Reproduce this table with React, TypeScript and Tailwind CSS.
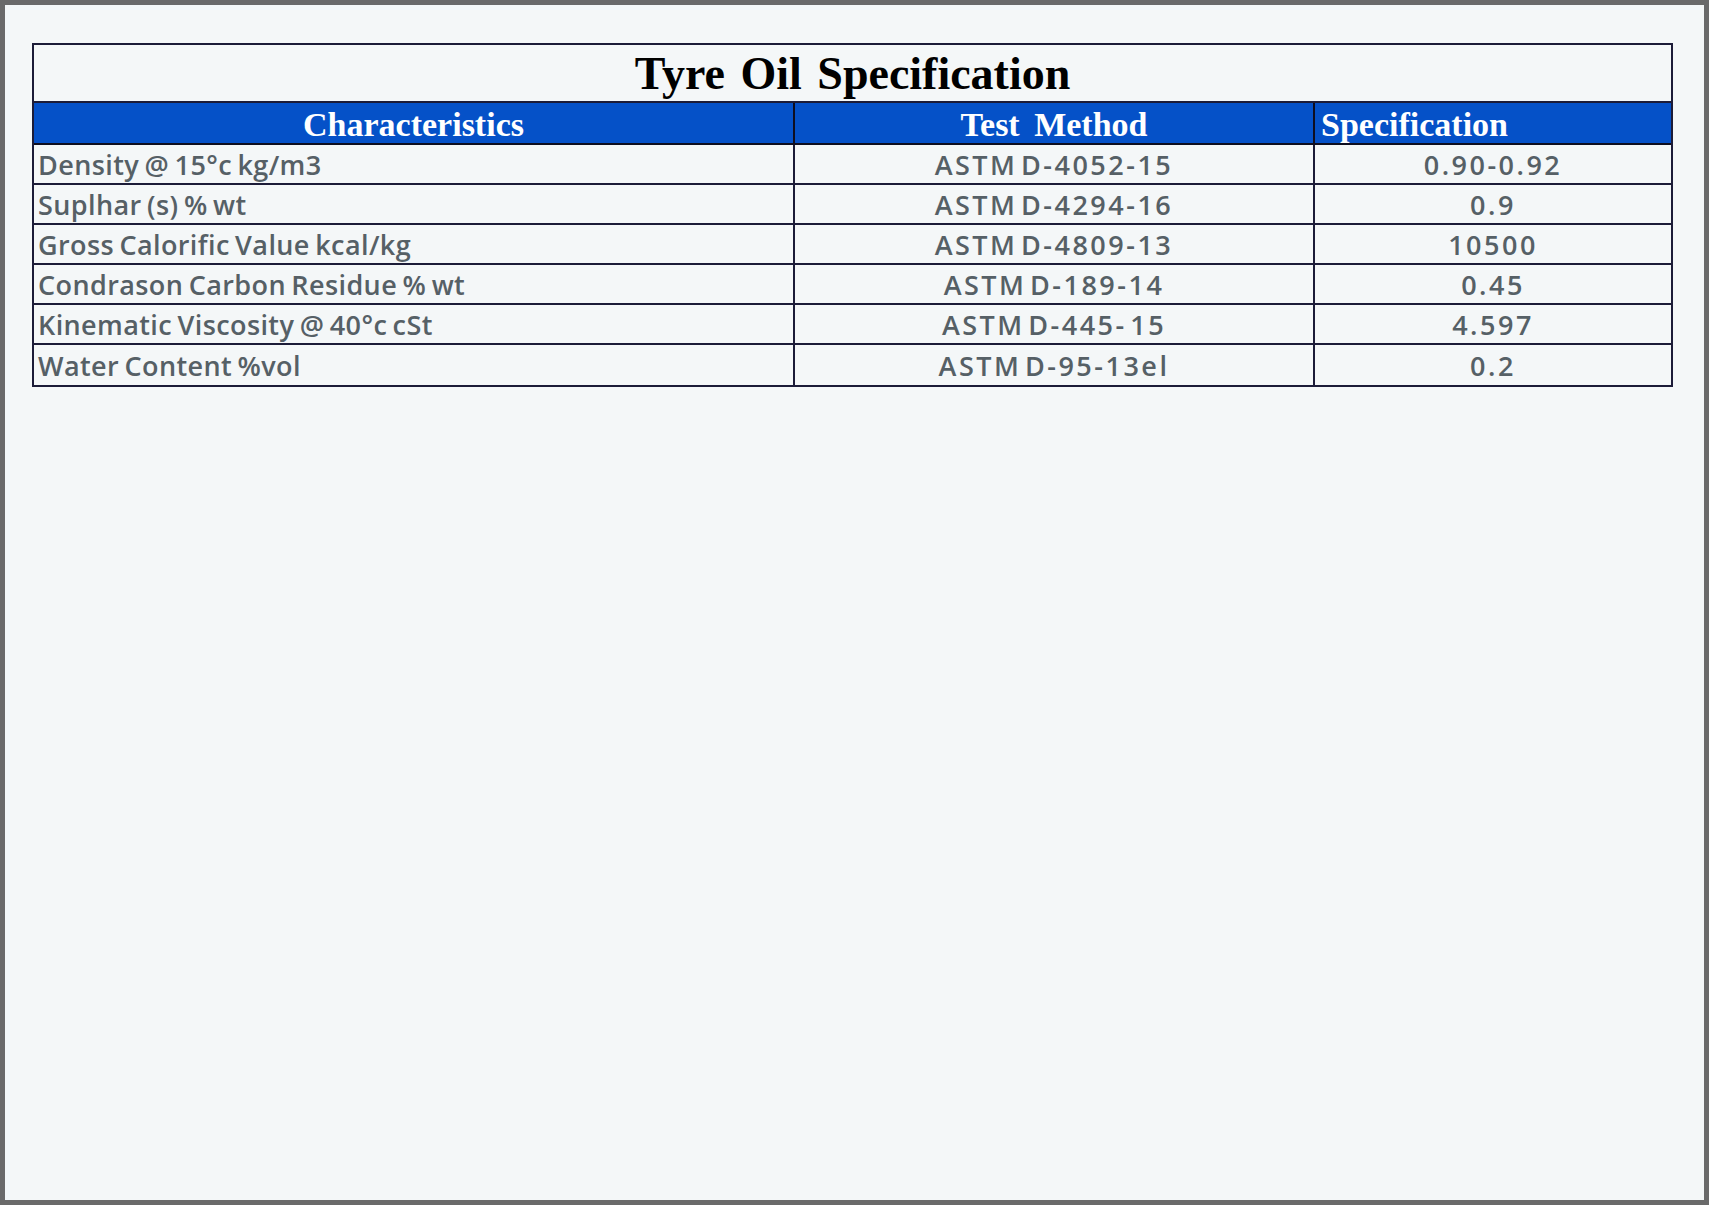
import React from "react";

const rows: [string, string, string][] = [
  ["Density @ 15°c kg/m3", "ASTM D-4052-15", "0.90-0.92"],
  ["Suplhar (s) % wt", "ASTM D-4294-16", "0.9"],
  ["Gross Calorific Value kcal/kg", "ASTM D-4809-13", "10500"],
  ["Condrason Carbon Residue % wt", "ASTM D-189-14", "0.45"],
  ["Kinematic Viscosity @ 40°c cSt", "ASTM D-445- 15", "4.597"],
  ["Water Content %vol", "ASTM D-95-13el", "0.2"],
];

export default function App() {
  return (
    <div className="w-[1709px] h-[1205px] border-[5px] border-[#6a6a6a] bg-[#f4f7f8] overflow-hidden">
      <div className="ml-[27px] mt-[38px] w-[1641px] border-2 border-[#1c1c38]">
        <div className="h-[58px] border-b-2 border-[#1c1c38] flex items-center justify-center">
          <span
            className="text-[46px] font-bold text-black leading-none [word-spacing:4px] pt-[2px]"
            style={{ fontFamily: '"Liberation Serif", serif' }}
          >
            Tyre Oil Specification
          </span>
        </div>
        <div
          className="h-[42px] border-b-2 border-[#0e0e20] bg-[#0551c8] grid grid-cols-[761px_520px_356px] text-white font-bold text-[34px] leading-none"
          style={{ fontFamily: '"Liberation Serif", serif' }}
        >
          <div className="border-r-2 border-[#0e0e20] flex items-center justify-center pt-[4px]">Characteristics</div>
          <div className="border-r-2 border-[#0e0e20] flex items-center justify-center pt-[4px] [word-spacing:6px]">Test Method</div>
          <div className="flex items-center pl-[6px] pt-[4px]">Specification</div>
        </div>
        {rows.map((r, i) => (
          <div
            key={i}
            className={
              "h-[40px] grid grid-cols-[761px_520px_356px] text-[27px] font-semibold text-[#566066] leading-none " +
              (i < rows.length - 1 ? "border-b-2 border-[#1c1c38]" : "")
            }
            style={{ fontFamily: '"Open Sans", "Liberation Sans", sans-serif' }}
          >
            <div className="border-r-2 border-[#1c1c38] flex items-center pl-[4px] tracking-[0.4px] [word-spacing:-2px]">{r[0]}</div>
            <div className="border-r-2 border-[#1c1c38] flex items-center justify-center tracking-[2.5px] [word-spacing:-6px]">{r[1]}</div>
            <div className="flex items-center justify-center tracking-[2.5px]">{r[2]}</div>
          </div>
        ))}
      </div>
    </div>
  );
}
